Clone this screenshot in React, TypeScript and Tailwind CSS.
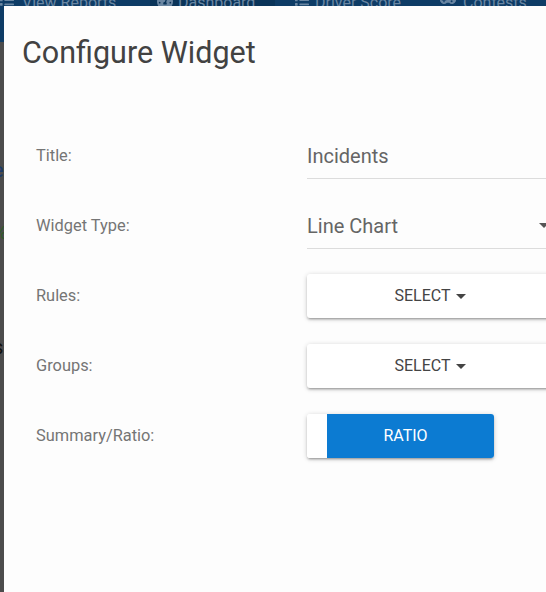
import React from 'react';
import { FaList, FaTachometerAlt, FaGamepad } from 'react-icons/fa';

const Caret: React.FC<{ className?: string }> = ({ className }) => (
  <svg viewBox="0 0 10 5" className={className} fill="currentColor">
    <path d="M0 0h10L5 5z" />
  </svg>
);

const Row: React.FC<{ label: string; children: React.ReactNode }> = ({ label, children }) => (
  <div className="flex items-center h-[70px]">
    <div className="w-[271px] text-[16.4px] text-[#757575]">{label}</div>
    <div className="w-[246px]">{children}</div>
  </div>
);

const SelectButton: React.FC = () => (
  <button className="w-full h-[44px] rounded-[3px] bg-white flex items-center justify-center gap-[5px] text-[16px] text-[#444] shadow-[0_1px_5px_rgba(0,0,0,0.2),0_2px_2px_rgba(0,0,0,0.14),0_3px_1px_-2px_rgba(0,0,0,0.12)]">
    SELECT
    <Caret className="w-[10px] h-[5px] text-[#444]" />
  </button>
);

export default function App() {
  return (
    <div className="relative w-[546px] h-[592px] overflow-hidden bg-[#4c4c4c] font-['Roboto',sans-serif]">
      <nav className="h-[42px] bg-[#0e3c66] flex overflow-hidden text-[16px] text-[#6a86a2]">
        <div className="w-[150px] flex items-start gap-[8px] -mt-[9px]">
          <FaList className="w-[14px] h-[14px] mt-[2px]" />
          View Reports
        </div>
        <div className="w-[125px] bg-[#0a3459] flex items-start gap-[5px] pl-[7px]">
          <div className="flex items-start gap-[5px] -mt-[9px]">
            <FaTachometerAlt className="w-[16px] h-[16px] mt-[1px]" />
            Dashboard
          </div>
        </div>
        <div className="w-[145px] flex items-start gap-[5px] pl-[19px] -mt-[9px]">
          <FaList className="w-[16px] h-[14px] mt-[2px]" />
          Driver Score
        </div>
        <div className="flex items-start gap-[7px] pl-[20px] -mt-[9px]">
          <FaGamepad className="w-[16px] h-[16px] mt-[1px]" />
          Contests
        </div>
      </nav>
      <div className="flex flex-col items-start text-[20px] leading-[20px] pt-[118px] -ml-[7px]">
        <span className="text-[#1b3a6b]">e</span>
        <span className="mt-[42px] text-[#2f5a2a]">%</span>
        <span className="mt-[95px] text-[#111]">s</span>
      </div>

      <div className="absolute left-[4px] top-[6px] w-[580px] h-[620px] bg-[#fdfdfd]">
        <h2 className="pl-[18px] pt-[32px] text-[30.5px] leading-[30px] text-[#424242]">Configure Widget</h2>
        <div className="mt-[53px] pl-[32px] flex flex-col">
          <Row label="Title:">
            <div className="h-[46px] flex items-center border-b border-[#dcdcdc] text-[20px] text-[#656565]">Incidents</div>
          </Row>
          <Row label="Widget Type:">
            <div className="h-[46px] flex items-center justify-between border-b border-[#dcdcdc] text-[20px] text-[#656565]">
              Line Chart
              <Caret className="w-[10px] h-[5px] mr-[4px] text-[#555]" />
            </div>
          </Row>
          <Row label="Rules:">
            <SelectButton />
          </Row>
          <Row label="Groups:">
            <SelectButton />
          </Row>
          <Row label="Summary/Ratio:">
            <div className="w-[187px] h-[44px] flex rounded-[3px] overflow-hidden shadow-[0_1px_5px_rgba(0,0,0,0.2),0_2px_2px_rgba(0,0,0,0.14),0_3px_1px_-2px_rgba(0,0,0,0.12)]">
              <div className="w-[20px] bg-white rounded-r-[3px]" />
              <div className="flex-1 bg-[#0c7bd2] flex items-center justify-center pr-[10px] text-[16px] text-white">RATIO</div>
            </div>
          </Row>
        </div>
      </div>
    </div>
  );
}
